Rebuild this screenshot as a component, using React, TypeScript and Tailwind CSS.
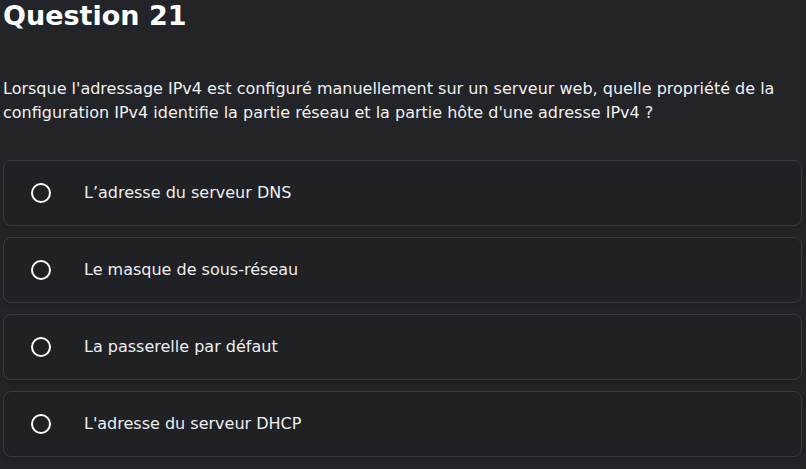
const options: string[] = [
  "L’adresse du serveur DNS",
  "Le masque de sous-réseau",
  "La passerelle par défaut",
  "L'adresse du serveur DHCP",
];

const Option: React.FC<{ label: string }> = ({ label }) => {
  return (
    <div className="flex items-center h-[66px] rounded-lg border border-[#3a3b40] bg-[#202125] shadow-md">
      <div className="w-[20px] h-[20px] ml-[27px] rounded-full border-2 border-white" />
      <span className="ml-[33px] text-[16px] text-[#eeeeee]">{label}</span>
    </div>
  );
};

export default function App() {
  return (
    <div
      className="min-h-[469px] bg-[#232428] text-white px-[3px]"
      style={{ fontFamily: '"DejaVu Sans", sans-serif' }}
    >
      <h1 className="text-[27px] font-bold leading-[30px] pt-[1px]">Question 21</h1>
      <p className="mt-[46px] text-[16px] leading-[24px] text-[#f0f0f0]">
        Lorsque l'adressage IPv4 est configuré manuellement sur un serveur web, quelle propriété de la
        configuration IPv4 identifie la partie réseau et la partie hôte d'une adresse IPv4 ?
      </p>
      <div className="mt-[35px] flex flex-col gap-[11px] pr-[1px]">
        {options.map((o, i) => (
          <Option label={o} key={i} />
        ))}
      </div>
    </div>
  );
}
